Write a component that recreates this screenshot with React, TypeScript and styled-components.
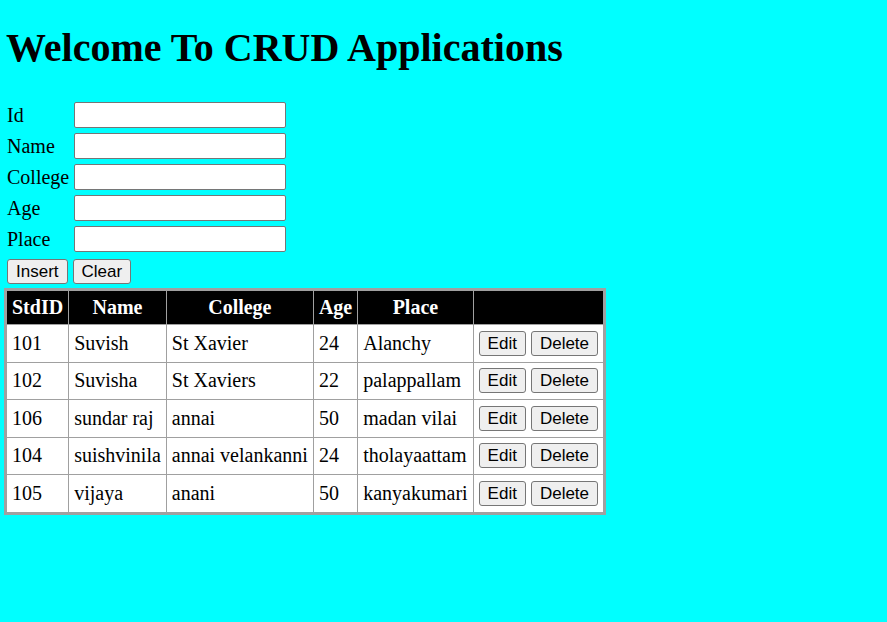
import React from "react";
import styled, { createGlobalStyle } from "styled-components";

const Global = createGlobalStyle`
  html, body { margin: 0; padding: 0; background: #00ffff; }
  body { font-family: "Liberation Serif", "Times New Roman", serif; font-size: 20px; color: #000; }
`;

const Page = styled.div`
  padding: 0 5px;
`;

const Title = styled.h1`
  font-size: 40px;
  font-weight: bold;
  margin: 25px 0 31px 1px;
  line-height: 46px;
`;

const Form = styled.div`
  display: grid;
  grid-template-columns: 67px 212px;
  row-gap: 5px;
  padding-left: 2px;
  align-items: center;
`;

const Label = styled.label`
  font-size: 20px;
  line-height: 26px;
  white-space: nowrap;
`;

const Input = styled.input`
  box-sizing: border-box;
  width: 212px;
  height: 26px;
  border: 1px solid #767676;
  border-radius: 2px;
  background: #fff;
  margin: 0;
`;

const Actions = styled.div`
  display: flex;
  gap: 5px;
  padding-left: 2px;
  margin-top: 7px;
  margin-bottom: 4px;
`;

const Btn = styled.button`
  box-sizing: border-box;
  font-family: "Liberation Sans", Arial, sans-serif;
  font-size: 17px;
  height: 25px;
  padding: 0 8px;
  background: #efefef;
  border: 1px solid #767676;
  border-radius: 3px;
  color: #000;
  line-height: 1;
`;

const Table = styled.table`
  border-collapse: collapse;
  border: 3px solid #a0a0a0;
  margin-left: -1px;
  background: #fff;
`;

const Th = styled.th`
  background: #000;
  color: #fff;
  font-weight: bold;
  font-size: 20px;
  height: 33px;
  padding: 0 5px;
  border: 1px solid #a0a0a0;
  text-align: center;
`;

const Td = styled.td`
  font-size: 20px;
  height: 36.5px;
  padding: 0 5px;
  border: 1px solid #a0a0a0;
  white-space: nowrap;
`;

const CellButtons = styled.div`
  display: flex;
  gap: 5px;
`;

const rows = [
  ["101", "Suvish", "St Xavier", "24", "Alanchy"],
  ["102", "Suvisha", "St Xaviers", "22", "palappallam"],
  ["106", "sundar raj", "annai", "50", "madan vilai"],
  ["104", "suishvinila", "annai velankanni", "24", "tholayaattam"],
  ["105", "vijaya", "anani", "50", "kanyakumari"],
];

export default function App() {
  return (
    <>
      <Global />
      <Page>
        <Title>Welcome To CRUD Applications</Title>
        <Form>
          {["Id", "Name", "College", "Age", "Place"].map((l) => (
            <React.Fragment key={l}>
              <Label>{l}</Label>
              <Input />
            </React.Fragment>
          ))}
        </Form>
        <Actions>
          <Btn>Insert</Btn>
          <Btn>Clear</Btn>
        </Actions>
        <Table>
          <thead>
            <tr>
              <Th>StdID</Th>
              <Th>Name</Th>
              <Th>College</Th>
              <Th>Age</Th>
              <Th>Place</Th>
              <Th></Th>
            </tr>
          </thead>
          <tbody>
            {rows.map((r) => (
              <tr key={r[0]}>
                {r.map((c, i) => (
                  <Td key={i}>{c}</Td>
                ))}
                <Td>
                  <CellButtons>
                    <Btn>Edit</Btn>
                    <Btn>Delete</Btn>
                  </CellButtons>
                </Td>
              </tr>
            ))}
          </tbody>
        </Table>
      </Page>
    </>
  );
}
